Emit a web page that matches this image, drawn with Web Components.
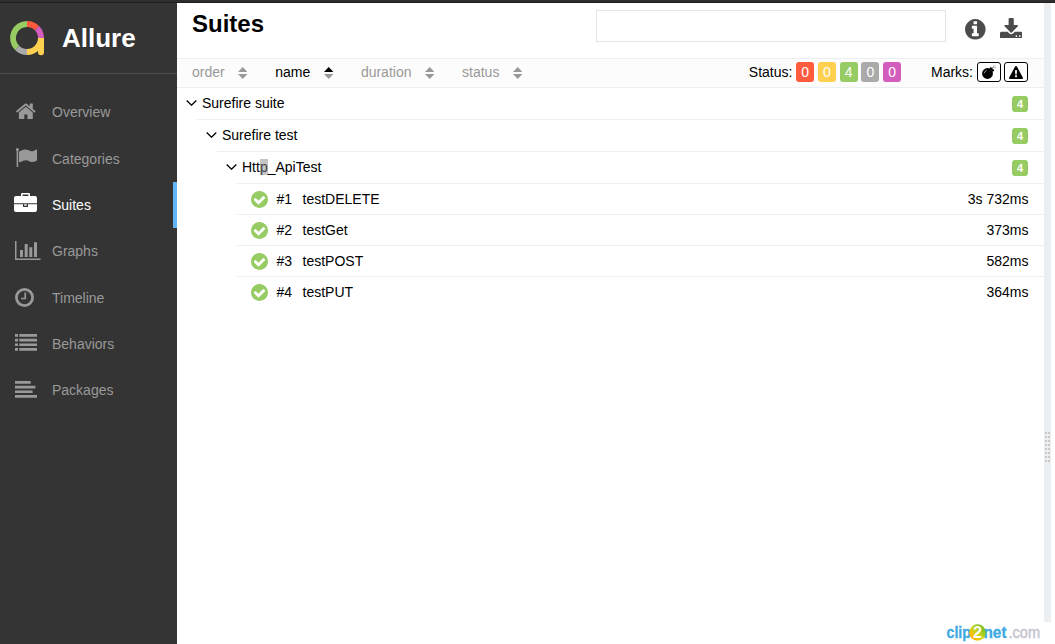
<!DOCTYPE html>
<html lang="en">
<head>
<meta charset="utf-8">
<title>Allure Report</title>
<style>
body{margin:0;background:#fff;font:14px/16px "Liberation Sans",Arial,sans-serif;color:#000;overflow:hidden}
</style>
</head>
<body>
<allure-app></allure-app>
<script>
function define(name, render) {
  customElements.define(name, class extends HTMLElement {
    connectedCallback() {
      if (this.shadowRoot) return;
      this.attachShadow({ mode: 'open' });
      const t = document.createElement('template');
      t.innerHTML = render(this);
      this.shadowRoot.append(t.content.cloneNode(true));
    }
  });
}

const circle = 'm0 0q0 209-103 385.5t-279.5 279.5-385.5 103-385.5-103-279.5-279.5-103-385.5 103-385.5 279.5-279.5 385.5-103 385.5 103 279.5 279.5 103 385.5z';
/* each entry: viewBox, width, height, content */
const icons = {
  home: ['0 128 1792 1536', 21.7, 18.6, '<path d="M1472 992v480q0 26-19 45t-45 19h-384v-384h-256v384h-384q-26 0-45-19t-19-45v-480q0-1 .5-3t.5-3l575-474 575 474q1 2 1 6zm223-69l-62 74q-8 9-21 11h-3q-13 0-21-7l-692-577-692 577q-12 8-24 7-13-2-21-11l-62-74q-8-10-7-23.5t11-21.5l719-599q32-26 76-26t76 26l244 204v-195q0-14 9-23t23-9h192q14 0 23 9t9 23v408l219 182q10 8 11 21.5t-7 23.5z"/>'],
  flag: ['0 128 1792 1536', 22.2, 19, '<path d="M320 256q0 72-64 110v1266q0 13-9.500 22.500t-22.500 9.500h-64q-13 0-22.500-9.500t-9.500-22.500v-1266q-64-38-64-110 0-53 37.500-90.500t90.500-37.500 90.500 37.500 37.500 90.500zm1472 64v763q0 25-12.500 38.500t-39.500 27.500q-215 116-369 116-61 0-123.500-22t-108.500-48-115.500-48-142.500-22q-192 0-464 146-17 9-33 9-26 0-45-19t-19-45v-742q0-32 31-55 21-14 79-43 236-120 421-120 107 0 200 29t219 88q38 19 88 19 54 0 117.500-21t110-47 88-47 54.500-21q26 0 45 19t19 45z"/>'],
  briefcase: ['0 0 23 19', 23, 19, '<path fill-rule="evenodd" d="M7 3V1.200Q7 0 8.200 0h6.600Q16 0 16 1.200V3h5q2 0 2 2v5.200H0V5q0-2 2-2zM8.600 3h5.800V1.600H8.600zM0 11.200h9V14h5v-2.800h9V17q0 2-2 2H2q-2 0-2-2zM10.200 11.200h2.600v1.500h-2.600z"/>'],
  chart: ['0 0 26 19', 26, 19, '<path d="M0 0h1.500v17.500H25.500V19H0zM5 9h3v7H5zM9.700 3h3v13h-3zM14.300 6.300h3V16h-3zM19 1.200h3V16h-3z"/>'],
  clock: ['0 0 19 19', 19, 19, '<circle cx="9.500" cy="9.500" r="8.100" fill="none" stroke="currentColor" stroke-width="2.800"/><path d="M9.400 4.400h1.700v6.900H6V9.700h3.400z"/>'],
  list: ['0 0 22 17', 22, 17, '<path d="M0 0h3v2.700H0zM4.300 0H22v2.700H4.300zM0 4.700h3v2.700H0zM4.300 4.700H22v2.700H4.300zM0 9.400h3v2.700H0zM4.300 9.400H22v2.700H4.300zM0 14.100h3v2.700H0zM4.300 14.100H22v2.700H4.300z"/>'],
  align: ['0 0 22 17', 22, 17, '<path d="M0 0h15.700v2.700H0zM0 4.700h20.400v2.700H0zM0 9.400h17.600v2.700H0zM0 14.100h22v2.700H0z"/>'],
  info: ['0 128 1536 1536', 20.600, 20.600, '<path d="M1024 1376v-160q0-14-9-23t-23-9h-96v-512q0-14-9-23t-23-9h-320q-14 0-23 9t-9 23v160q0 14 9 23t23 9h96v320h-96q-14 0-23 9t-9 23v160q0 14 9 23t23 9h448q14 0 23-9t9-23zm-128-896v-160q0-14-9-23t-23-9h-192q-14 0-23 9t-9 23v160q0 14 9 23t23 9h192q14 0 23-9t9-23zM1536 896' + circle + '"/>'],
  download: ['64 0 1664 1536', 22.400, 20.700, '<path d="M1344 1344q0-26-19-45t-45-19-45 19-19 45 19 45 45 19 45-19 19-45zm256 0q0-26-19-45t-45-19-45 19-19 45 19 45 45 19 45-19 19-45zm128-224v320q0 40-28 68t-68 28h-1472q-40 0-68-28t-28-68v-320q0-40 28-68t68-28h465l135 136q58 56 136 56t136-56l136-136h464q40 0 68 28t28 68zm-325-569q17 41-14 70l-448 448q-18 19-45 19t-45-19l-448-448q-31-29-14-70 17-39 59-39h256v-448q0-26 19-45t45-19h256q26 0 45 19t19 45v448h256q42 0 59 39z"/>'],
  check: ['128 128 1536 1536', 17, 17, '<path d="M1412 734q0-28-18-46l-91-90q-19-19-45-19t-45 19l-408 407-226-226q-19-19-45-19t-45 19l-91 90q-18 18-18 46 0 27 18 45l362 362q19 19 45 19 27 0 46-19l543-543q18-18 18-45zM1664 896' + circle + '"/>'],
  bomb: ['0 0 14 14', 14, 14, '<circle cx="5.500" cy="8.500" r="5.400"/><path d="M7.300 3.200 8.900 1.900l3.400 3.400-1.400 1.600z"/><path d="M9.800 3.500q1.200-2 2.600-1.600" fill="none" stroke="#555" stroke-width=".8"/><path d="M2.300 8.300q.3-2.200 2.300-2.900" fill="none" stroke="#fff" stroke-width=".6"/><path d="M11.700.2l.4 1M13.800.3l-.8.9M14 2.700l-1-.3M12.700 3.600l-.3-.8" stroke="#888" stroke-width=".6"/>'],
  warning: ['0 0 14 13', 14, 13, '<path fill-rule="evenodd" d="M6.100.6q.9-1.200 1.800 0l5.900 10.900q.6 1.300-.8 1.500H1q-1.400-.2-.8-1.500zM6 4.200l.3 4.200h1.400L8 4.200zM6.100 9.300v1.900h1.800V9.300z"/>'],
  chevron: ['0 0 11 6', 11, 6, '<path d="M.7.500 5.500 5.200 10.300.500" fill="none" stroke="currentColor" stroke-width="1.300"/>'],
  logo: ['0 0 36 36', 36, 36, `<g fill="none" stroke-width="6">
    <path stroke="#97cc64" d="M8.100 27.900A14 14 0 0 1 18 4"/><path stroke="#fd5a3e" d="M18 4A14 14 0 0 1 27.900 8.100"/>
    <path stroke="#d35ebe" d="M27.900 8.100A14 14 0 0 1 32 18"/><path stroke="#aaa" d="M18 32A14 14 0 0 1 8.100 27.900"/>
    <path stroke="#ffd050" d="M32 18A14 14 0 0 1 18 32"/></g><path fill="#ffd050" d="M29 18h6v14.200a2.800 2.800 0 0 1-6 0z"/>`]
};

define('a-icon', el => {
  const [box, w, h, body] = icons[el.getAttribute('name')];
  return `<style>:host{display:block;width:${w}px;height:${h}px;flex:none}svg{display:block}</style>
  <svg viewBox="${box}" width="${w}" height="${h}" fill="currentColor">${body}</svg>`;
});

define('nav-item', el => `<style>
  :host{display:flex;align-items:center;box-sizing:border-box;height:46.300px;padding-left:15px;color:#999}
  :host([active]){color:#fff;border-right:4px solid #64b5f6}
  .i{width:37px;padding-bottom:1.500px}
  :host([icon=clock]) .i{padding-bottom:0}
  :host([icon=list]) .i{padding-bottom:3px}
  :host([active]) .i{margin-left:-.6px;width:37.600px;padding-bottom:5px}
</style><div class="i"><a-icon name="${el.getAttribute('icon')}"></a-icon></div><slot></slot>`);

define('side-nav', () => `<style>
  :host{display:block;background:#343434}
  header{display:flex;align-items:center;gap:17px;height:70px;padding-left:9px;border-bottom:1px solid #505050;color:#fff;font:bold 26px/30px "Liberation Sans",Arial,sans-serif}
  nav{padding-top:15.200px}
</style><header><a-icon name="logo"></a-icon><span>Allure</span></header>
<nav><nav-item icon="home">Overview</nav-item><nav-item icon="flag">Categories</nav-item><nav-item icon="briefcase" active>Suites</nav-item><nav-item icon="chart">Graphs</nav-item><nav-item icon="clock">Timeline</nav-item><nav-item icon="list">Behaviors</nav-item><nav-item icon="align">Packages</nav-item></nav>`);

define('sort-key', el => `<style>
  :host{display:flex;align-items:center;gap:13.300px;color:#999}
  :host([active]){color:#000}
  svg{display:block;margin-top:2px}
</style><slot></slot><svg width="9.400" height="12" viewBox="0 0 9.400 12"><path fill="currentColor" d="M0 5 4.700 0 9.400 5z"/><path fill="#999" d="M0 7h9.400l-4.700 5z"/></svg>`);

define('count-badge', el => `<style>
  :host{display:block;box-sizing:border-box;width:18px;height:20px;border-radius:3px;background:${el.getAttribute('color')};color:#fff;text-align:center;line-height:20px}
  :host([small]){width:16px;height:16px;font:bold 11px/16px "Liberation Sans",Arial,sans-serif}
</style><slot></slot>`);

define('mark-toggle', el => `<style>
  :host{display:flex;align-items:center;justify-content:center;box-sizing:border-box;width:24px;height:20px;border:1px solid #000;border-radius:3px;background:#fff}
</style><a-icon name="${el.getAttribute('icon')}"></a-icon>`);

define('tree-group', el => `<style>
  :host{display:block}
  .row{display:flex;align-items:center;box-sizing:border-box;height:32px;margin-left:20px;padding-right:16px;border-bottom:1px solid #eceff1}
  a-icon{margin:0 5px 2px -11px}
  .name{flex:1;padding-bottom:2px}
  .kids{padding-left:20px}
</style><div class="row"><a-icon name="chevron"></a-icon><span class="name"><slot name="title"></slot></span><count-badge small color="#97cc64">4</count-badge></div>
<div class="kids"><slot></slot></div>`);

define('test-row', el => `<style>
  :host{display:flex;align-items:center;box-sizing:border-box;height:31px;padding:0 15.500px 0 13.500px;border-bottom:1px solid #eceff1}
  :host([last]){border-color:transparent}
  a-icon{color:#97cc64;margin-right:9px}
  .n{width:26px}.t{flex:1}
</style><a-icon name="check"></a-icon><span class="n">#${el.getAttribute('n')}</span><span class="t"><slot></slot></span><span>${el.getAttribute('time')}</span>`);

define('suites-pane', () => `<style>
  :host{display:block;min-width:0}
  .head{display:flex;height:55px;padding-left:15px;padding-right:22px}
  h1{margin:6px 0 0;flex:1;font:bold 24px/30px "Liberation Sans",Arial,sans-serif}
  input{box-sizing:border-box;width:350px;height:32px;margin:7px 19px 0 0;border:1px solid #e4e4e4;background:#fff}
  .info{color:#4c4c4c;margin:16.200px 14px 0 0}.dl{color:#4c4c4c;margin-top:14.500px}
  .bar{display:flex;align-items:center;box-sizing:border-box;height:30px;padding:0 16px 2px 15px;background:#fcfcfc;border:solid #eceff1;border-width:1px 0}
  .keys{display:flex;gap:27.900px;flex:1}
  .set{display:flex;align-items:center}
  .status{gap:3.750px;margin-right:29.800px}.marks{gap:3px}
  .status .label{margin-right:0}
  .marks .label{margin-right:1px}
  .sel{background:#c4c4c4;color:#444}
</style>
<div class="head"><h1>Suites</h1><input aria-label="Search"><a-icon class="info" name="info"></a-icon><a-icon class="dl" name="download"></a-icon></div>
<div class="bar"><div class="keys"><sort-key>order</sort-key><sort-key active>name</sort-key><sort-key>duration</sort-key><sort-key>status</sort-key></div>
<div class="set status"><span class="label">Status:</span><count-badge color="#fd5a3e">0</count-badge><count-badge color="#ffd050">0</count-badge><count-badge color="#97cc64">4</count-badge><count-badge color="#aaa">0</count-badge><count-badge color="#d35ebe">0</count-badge></div>
<div class="set marks"><span class="label">Marks:</span><mark-toggle icon="bomb"></mark-toggle><mark-toggle icon="warning"></mark-toggle></div></div>
<tree-group><span slot="title">Surefire suite</span>
 <tree-group><span slot="title">Surefire test</span>
  <tree-group><span slot="title">Htt<span class="sel">p</span>_ApiTest</span>
   <test-row n="1" time="3s 732ms">testDELETE</test-row><test-row n="2" time="373ms">testGet</test-row><test-row n="3" time="582ms">testPOST</test-row><test-row n="4" time="364ms" last>testPUT</test-row>
  </tree-group>
 </tree-group>
</tree-group>`);

define('split-gutter', () => `<style>
  :host{display:block;height:619px;background:#ebeff2}
  .grip{width:5px;height:30px;margin:0 auto;padding-top:429px;background:repeating-linear-gradient(#c8c8c8 0 2px,transparent 2px 4px) content-box}
  i{display:block;width:1px;height:30px;margin:0 2px;background:#ebeff2}
</style><div class="grip"><i></i></div>`);

define('clip-mark', () => `<style>:host{position:absolute;left:945px;top:620px;display:block}svg{display:block}text{font-family:"Liberation Sans",sans-serif}</style>
<svg width="100" height="24" viewBox="0 0 100 24"><defs><linearGradient id="g" x1="1" y1="0" x2="0" y2="1"><stop stop-color="#4eb82c"/><stop offset=".5" stop-color="#c6d51b"/><stop offset=".75" stop-color="#ffc000"/><stop offset="1" stop-color="#ff9500"/></linearGradient></defs>
<text x="1.500" y="18" font-size="16" font-weight="700" fill="#3daae2" stroke="#3daae2" stroke-width=".3" textLength="24.500" lengthAdjust="spacingAndGlyphs">clip</text>
<text x="38.500" y="18" font-size="16" font-weight="700" fill="#3daae2" stroke="#3daae2" stroke-width=".3" textLength="23" lengthAdjust="spacingAndGlyphs">net</text>
<text x="63.500" y="18" font-size="16" fill="#c5c5cf" stroke="#c5c5cf" stroke-width=".5" textLength="31.500" lengthAdjust="spacingAndGlyphs">.com</text>
<circle cx="32.500" cy="12.500" r="8.300" fill="url(#g)"/><text x="28" y="18.300" font-size="16" font-weight="700" fill="#fff" textLength="9" lengthAdjust="spacingAndGlyphs">2</text></svg>`);

define('allure-app', () => `<style>
  :host{display:grid;position:relative;box-sizing:border-box;width:1055px;height:644px;grid-template:3px 641px/177px 867px 7px 4px;overflow:hidden}
  .top{grid-column:1/-1;background:linear-gradient(#2e2e2e 2px,#1f1f1f 2px)}
</style><div class="top"></div><side-nav></side-nav><suites-pane></suites-pane><split-gutter></split-gutter><clip-mark></clip-mark>`);
</script>
</body>
</html>
